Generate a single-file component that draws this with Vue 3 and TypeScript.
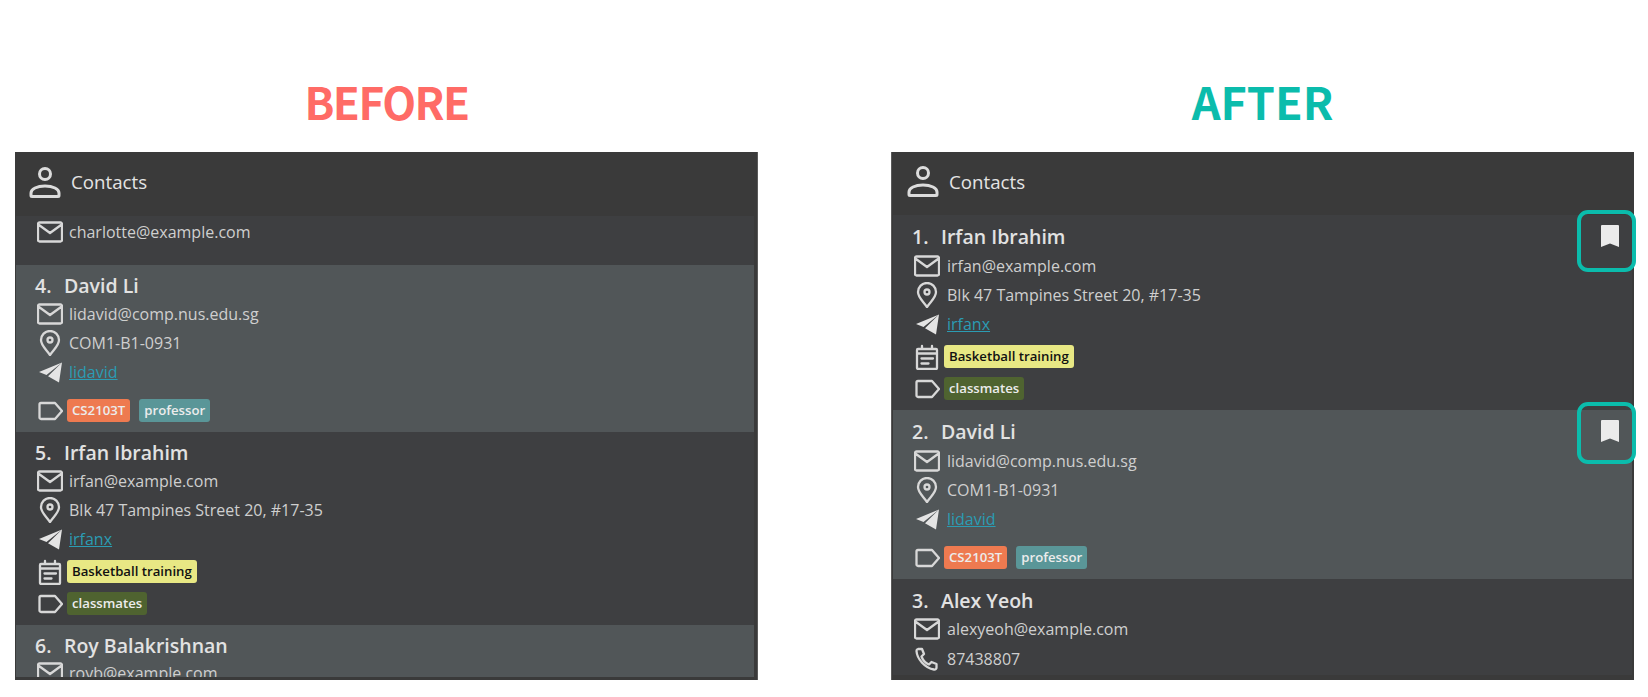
<script setup lang="ts">
interface Tag {
  label: string;
  color: string;
}

interface Person {
  index?: number;
  name?: string;
  email?: string;
  phone?: string;
  address?: string;
  telegram?: string;
  event?: string;
  tags?: Tag[];
  bookmarked?: boolean;
  tinted?: boolean;
  cut?: boolean;
}

const orange = 'tag--orange';
const teal = 'tag--teal';
const olive = 'tag--olive';

const before: Person[] = [
  { email: 'charlotte@example.com', cut: true },
  {
    index: 4,
    name: 'David Li',
    email: 'lidavid@comp.nus.edu.sg',
    address: 'COM1-B1-0931',
    telegram: 'lidavid',
    tags: [
      { label: 'CS2103T', color: orange },
      { label: 'professor', color: teal },
    ],
    tinted: true,
  },
  {
    index: 5,
    name: 'Irfan Ibrahim',
    email: 'irfan@example.com',
    address: 'Blk 47 Tampines Street 20, #17-35',
    telegram: 'irfanx',
    event: 'Basketball training',
    tags: [{ label: 'classmates', color: olive }],
  },
  { index: 6, name: 'Roy Balakrishnan', email: 'royb@example.com', tinted: true },
];

const after: Person[] = [
  {
    index: 1,
    name: 'Irfan Ibrahim',
    email: 'irfan@example.com',
    address: 'Blk 47 Tampines Street 20, #17-35',
    telegram: 'irfanx',
    event: 'Basketball training',
    tags: [{ label: 'classmates', color: olive }],
    bookmarked: true,
  },
  {
    index: 2,
    name: 'David Li',
    email: 'lidavid@comp.nus.edu.sg',
    address: 'COM1-B1-0931',
    telegram: 'lidavid',
    tags: [
      { label: 'CS2103T', color: orange },
      { label: 'professor', color: teal },
    ],
    tinted: true,
    bookmarked: true,
  },
  {
    index: 3,
    name: 'Alex Yeoh',
    email: 'alexyeoh@example.com',
    phone: '87438807',
    address: 'Blk 30 Geylang Street 29, #06-40',
  },
];

const panels = [
  { title: 'BEFORE', mod: 'panel--before', people: before },
  { title: 'AFTER', mod: 'panel--after', people: after },
];

const icons = {
  mail: 'M2.500 3.500h21a1.500 1.500 0 0 1 1.500 1.500v16a1.500 1.500 0 0 1-1.500 1.500h-21A1.500 1.500 0 0 1 1 21V5a1.500 1.500 0 0 1 1.500-1.500zM2 6l11 8 11-8',
  phone: 'M4 3h4l2 5-2.500 2.500c1.500 4 3.500 6.500 7.500 8l2.500-2.500 5 2v3.500a2 2 0 0 1-2.500 2C11 22 3 13 2.500 5A2 2 0 0 1 4 3z',
  pin: 'M13 25C9 19 4 15.500 4 10a9 9 0 0 1 18 0c0 5.500-5 9-9 15zM13 7.500a2.500 2.500 0 1 0 0 5 2.500 2.500 0 0 0 0-5z',
  event: 'M4 5h18a1 1 0 0 1 1 1v18a1 1 0 0 1-1 1H4a1 1 0 0 1-1-1V6a1 1 0 0 1 1-1zM8 2v3M18 2v3M3 9.500h20M7.500 14.500H19M7.500 19.500h7',
  tag: 'M4 5h14l7 8-7 8H4a1.500 1.500 0 0 1-1.500-1.500v-13A1.500 1.500 0 0 1 4 5z',
};
</script>

<template>
  <div class="page">
    <section v-for="panel in panels" :key="panel.title" class="column" :class="panel.mod">
      <h2 class="column__title">{{ panel.title }}</h2>
      <div class="panel">
        <header class="panel__head">
          <svg class="panel__icon" viewBox="0 0 32 32" aria-hidden="true">
            <circle cx="16" cy="8" r="5.500" />
            <path d="M3 30.500a1 1 0 0 1-1-1V27c0-4 6-7 14-7s14 3 14 7v2.500a1 1 0 0 1-1 1z" />
          </svg>
          <span>Contacts</span>
        </header>
        <div class="panel__list">
          <article
            v-for="(person, i) in panel.people"
            :key="i"
            class="card"
            :class="{ 'card--tinted': person.tinted, 'card--cut': person.cut }"
          >
            <div v-if="person.name" class="card__name">
              <span class="card__index">{{ person.index }}.</span>
              <span>{{ person.name }}</span>
            </div>
            <div v-if="person.email" class="row">
              <svg class="icon" viewBox="0 0 26 26" aria-hidden="true"><path :d="icons.mail" /></svg>
              <span>{{ person.email }}</span>
            </div>
            <div v-if="person.phone" class="row">
              <svg class="icon" viewBox="0 0 26 26" aria-hidden="true"><path :d="icons.phone" /></svg>
              <span>{{ person.phone }}</span>
            </div>
            <div v-if="person.address" class="row">
              <svg class="icon" viewBox="0 0 26 26" aria-hidden="true"><path :d="icons.pin" /></svg>
              <span>{{ person.address }}</span>
            </div>
            <div v-if="person.telegram" class="row">
              <svg class="icon icon--solid" viewBox="0 0 26 26" aria-hidden="true">
                <path d="M25 3.500 2 13l7.500 3zM25 3.500 11 17.200 22 23.500z" />
              </svg>
              <a class="row__link" href="#">{{ person.telegram }}</a>
            </div>
            <div v-if="person.event" class="row row--tags row--event">
              <svg class="icon" viewBox="0 0 26 26" aria-hidden="true"><path :d="icons.event" /></svg>
              <span class="tag tag--yellow">{{ person.event }}</span>
            </div>
            <div v-if="person.tags" class="row row--tags" :class="{ 'row--gap': !person.event }">
              <svg class="icon" viewBox="0 0 26 26" aria-hidden="true"><path :d="icons.tag" /></svg>
              <span v-for="tag in person.tags" :key="tag.label" class="tag" :class="tag.color">{{ tag.label }}</span>
            </div>
            <div v-if="person.bookmarked" class="mark">
              <svg class="mark__icon" viewBox="0 0 18 22" aria-hidden="true">
                <path d="M1 0h16a1 1 0 0 1 1 1v21l-9-3.500L0 22V1a1 1 0 0 1 1-1z" />
              </svg>
            </div>
          </article>
        </div>
      </div>
    </section>
  </div>
</template>

<style>
body {
  background: #fff;
}
</style>

<style scoped>
.page {
  display: flex;
  gap: 133px;
  width: 1648px;
  height: 697px;
  padding-left: 15px;
  box-sizing: border-box;
  overflow: hidden;
  font-family: "Open Sans", "Noto Sans", sans-serif;
}

.column {
  width: 743px;
}

.column__title {
  margin: 0;
  padding: 65px 0 15px;
  font-family: "Noto Sans CJK SC", "Noto Sans", sans-serif;
  font-size: 44px;
  font-weight: 700;
  line-height: 72px;
  letter-spacing: -1.500px;
  text-align: center;
}

.panel--before .column__title {
  color: #ff6b66;
}

.panel--after .column__title {
  font-size: 45px;
  letter-spacing: 0;
  color: #0bbcac;
}

.panel {
  display: flex;
  flex-direction: column;
  height: 528px;
  padding: 0 3px 3px 1px;
  box-sizing: border-box;
  background: #3a3a3a;
  border-right: 1px solid #5a5a5a;
}

.panel--after .panel {
  padding: 0 2px 5px 1px;
  border-left: 1px solid #5a5a5a;
  border-right: 0;
}

.panel__head {
  display: flex;
  flex: none;
  align-items: center;
  gap: 10px;
  height: 64px;
  padding: 0 0 5px 13px;
  box-sizing: border-box;
  font-size: 18.700px;
  font-weight: 500;
  color: #e4e4e4;
}

.panel--after .panel__head {
  height: 63px;
  padding-left: 14px;
}

.panel__icon {
  width: 32px;
  height: 32px;
  fill: none;
  stroke: #dcdcdc;
  stroke-width: 3;
}

/* clip only at the bottom, the marks stick out on the other sides */
.panel__list {
  flex: 1;
  min-height: 0;
  clip-path: inset(-10px -10px 0 -10px);
}

.card {
  position: relative;
  padding: 8px 19px 5px;
  background: #3e3f41;
}

.panel--after .card {
  padding: 9px 18px 5px 19px;
}

.card--tinted {
  background: #515658;
}

.card--cut {
  height: 49px;
  padding-top: 1px;
  box-sizing: border-box;
}

.card__name {
  display: flex;
  height: 26px;
  font-size: 19.500px;
  font-weight: 550;
  line-height: 25px;
  color: #e2e2e2;
  white-space: pre;
}

.card__index {
  width: 29px;
}

.panel--after .card__name {
  margin-bottom: 1px;
}

.row {
  display: flex;
  align-items: center;
  gap: 6px;
  height: 29.300px;
  padding-left: 2px;
  font-size: 16px;
  color: #cfcfcf;
}

.panel--after .row {
  gap: 7px;
}

.panel .row--tags {
  gap: 4px;
  height: 32px;
}

.row--event {
  margin-top: 2px;
}

.row--gap {
  margin-top: 8px;
}

.row__link {
  color: #2b9cb3;
}

.icon {
  flex: none;
  width: 26px;
  height: 26px;
  fill: none;
  stroke: #d8d8d8;
  stroke-width: 2.300;
  stroke-linejoin: round;
  stroke-linecap: round;
}

.icon--solid {
  fill: #e4e4e4;
  stroke: none;
}

.tag {
  height: 23px;
  margin-right: 5px;
  padding: 0 5px;
  border-radius: 3px;
  font-size: 13.200px;
  font-weight: 550;
  line-height: 23px;
  color: #ececec;
}

.tag--orange {
  background: #ee7a50;
}

.tag--teal {
  background: #5a9698;
}

.tag--olive {
  background: #4f6330;
}

.tag--yellow {
  background: #e8e884;
  color: #111;
}

/* annotation over the card corner */
.mark {
  position: absolute;
  top: -5px;
  right: -4px;
  display: flex;
  justify-content: center;
  width: 59px;
  height: 62px;
  padding: 11px 0 0 7px;
  box-sizing: border-box;
  border: 4px solid #0bbcac;
  border-radius: 11px;
}

.card--tinted .mark {
  top: -8px;
  padding-top: 14px;
}

.mark__icon {
  width: 18px;
  height: 22px;
  fill: #ebebeb;
}
</style>
